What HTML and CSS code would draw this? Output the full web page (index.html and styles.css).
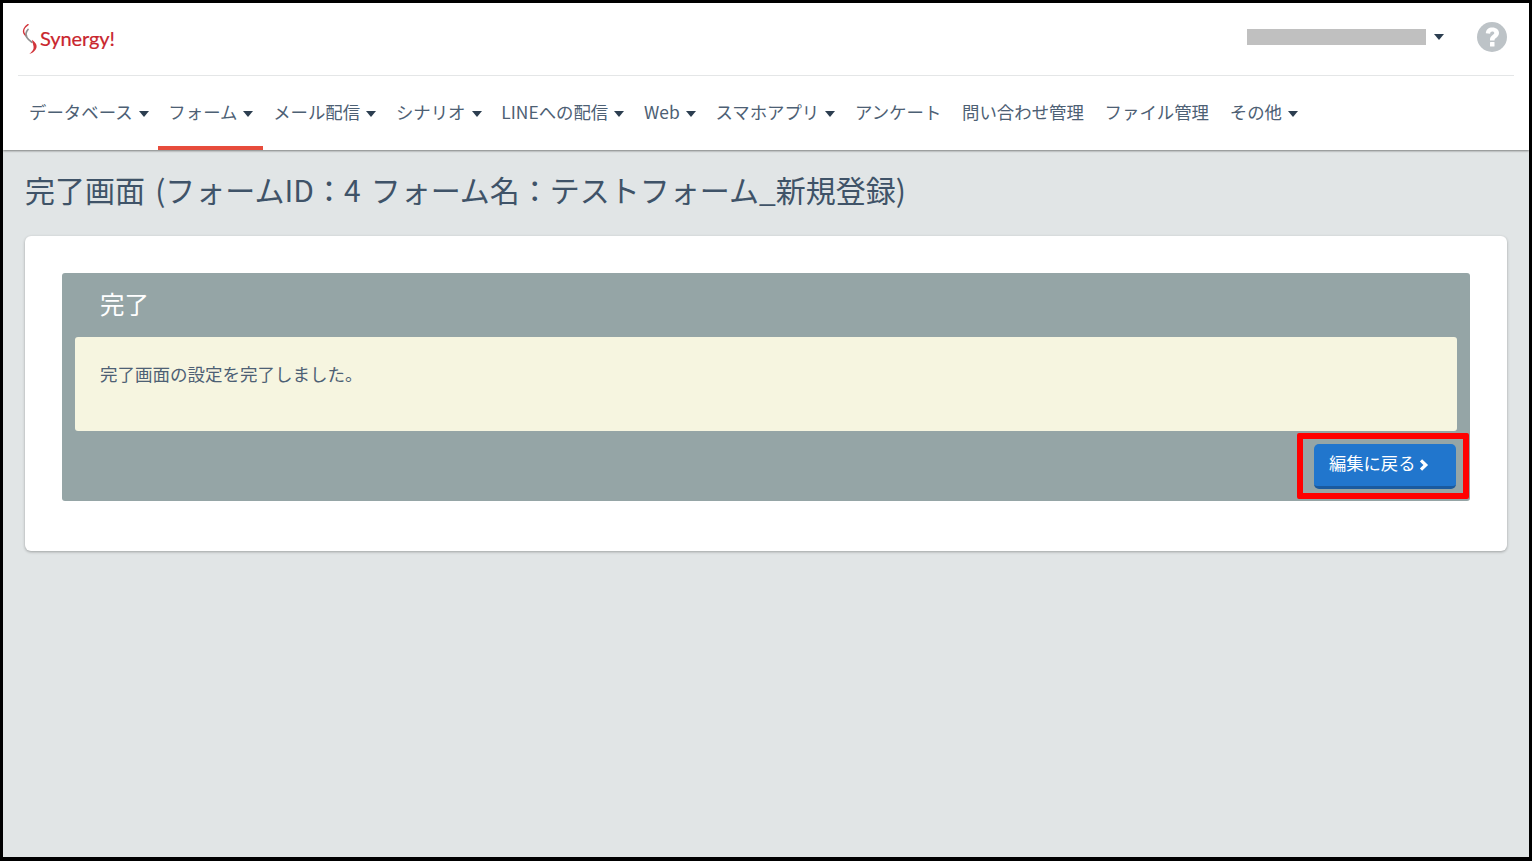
FILE: index.html
```html
<!DOCTYPE html>
<html lang="ja">
<head>
    <meta charset="UTF-8">
    <title>完了画面</title>
    <link rel="stylesheet" href="styles.css">
</head>
<body>
    <div class="frame">
        <header class="site-header">
            <div class="top-bar">
                <a class="logo" href="#">
                    <svg class="logo-mark" width="16" height="30" viewBox="0 0 16 30" fill="none" stroke-linecap="round">
                        <path d="M6 .7C2.500 3 .8 6.500 2 9.200C2.600 10.500 3.400 11.300 4.500 12" stroke="#d2353b" stroke-width="1.500"/>
                        <path d="M6 5.500C3.800 8 3.400 10.800 4.800 13.300C6 15.400 8 16.800 10 18.300" stroke="#8f8f8f" stroke-width="1.700"/>
                        <path d="M10 15.700C13 18 15 20 14.600 23C14.200 26 11 29 7.300 30C10 27.500 12 25.500 11.600 22.800C11.300 20.500 10.500 18.500 10 15.700Z" fill="#d2353b"/>
                    </svg>
                    <span class="logo-text">Synergy!</span>
                </a>
                <div class="user-box">
                    <span class="user-mask"></span>
                    <span class="caret caret-user"></span>
                    <svg class="help-icon" width="30" height="30" viewBox="0 0 30 30">
                        <circle cx="15" cy="15" r="15" fill="#bdc3c7"/>
                        <path d="M8.800 11.300C9.100 7.500 11.500 5.500 15.300 5.500C19.300 5.500 22 7.800 22 11.100C22 13.500 20.700 14.700 19 15.900C17.800 16.700 17.500 17.300 17.500 18.600H13V17.800C13 15.700 13.700 14.500 15.400 13.300C16.700 12.400 17.300 11.900 17.300 11.100C17.300 10.100 16.500 9.500 15.300 9.500C14 9.500 13.300 10.300 13.100 11.700Z" fill="#fff"/>
                        <rect x="13" y="20" width="4.500" height="4.500" rx="0.500" fill="#fff"/>
                    </svg>
                </div>
            </div>
            <nav class="main-nav">
                <a class="nav-item" href="#">データベース<span class="caret"></span></a>
                <a class="nav-item is-active" href="#">フォーム<span class="caret"></span></a>
                <a class="nav-item" href="#">メール配信<span class="caret"></span></a>
                <a class="nav-item" href="#">シナリオ<span class="caret"></span></a>
                <a class="nav-item" href="#">LINEへの配信<span class="caret"></span></a>
                <a class="nav-item" href="#">Web<span class="caret"></span></a>
                <a class="nav-item" href="#">スマホアプリ<span class="caret"></span></a>
                <a class="nav-item" href="#">アンケート</a>
                <a class="nav-item" href="#">問い合わせ管理</a>
                <a class="nav-item" href="#">ファイル管理</a>
                <a class="nav-item" href="#">その他<span class="caret"></span></a>
            </nav>
        </header>

        <main class="content">
            <h1 class="page-title">完了画面 (フォームID：4 フォーム名：テストフォーム_新規登録)</h1>
            <section class="card">
                <div class="panel">
                    <h2 class="panel-title">完了</h2>
                    <div class="notice">完了画面の設定を完了しました。</div>
                    <div class="panel-actions">
                        <a class="btn-back" href="#">編集に戻る
                            <svg class="chevron" width="10" height="12" viewBox="0 0 10 12">
                                <path d="M2 1.300L6.800 6L2 10.700" fill="none" stroke="#fff" stroke-width="3.200"/>
                            </svg>
                        </a>
                    </div>
                    <div class="highlight"></div>
                </div>
            </section>
        </main>
    </div>
</body>
</html>
```

FILE: styles.css
```css
html, body {
    margin: 0;
    height: 100%;
}
body {
    background-color: #000;
    font-family: "Noto Sans CJK JP", "Noto Sans", sans-serif;
    color: #34495e;
}
a {
    color: inherit;
    text-decoration: none;
}
.frame {
    box-sizing: border-box;
    height: 861px;
    margin: 0 3px;
    border-top: 3px solid #000;
    border-bottom: 4px solid #000;
    background-color: #e1e5e6;
    overflow: hidden;
}
.site-header {
    background-color: #fff;
    height: 147px;
    box-shadow: 0 1px 2px rgba(0,0,0,0.45);
    padding: 0 15px;
}
.top-bar {
    height: 72px;
    border-bottom: 1px solid #e4e6e7;
    display: flex;
    align-items: center;
    justify-content: space-between;
}
.logo {
    display: flex;
    align-items: center;
    gap: 2px;
    margin-left: 4px;
    margin-top: -1px;
}
.logo-text {
    font-family: "Lato", sans-serif;
    font-size: 20px;
    letter-spacing: -0.1px;
    line-height: 28px;
    margin-top: -2px;
    color: #c9252d;
    -webkit-text-stroke: 0.2px #c9252d;
}
.user-box {
    display: flex;
    align-items: center;
    margin-top: -5px;
    margin-right: 7px;
}
.user-mask {
    width: 179px;
    height: 16px;
    background-color: #c0c0c0;
}
.caret {
    display: inline-block;
    width: 0;
    height: 0;
    margin-left: 6px;
    margin-right: -1px;
    vertical-align: 2px;
    border-top: 6px solid #2c3e50;
    border-left: 5px solid transparent;
    border-right: 5px solid transparent;
}
.caret-user {
    margin-left: 8px;
    margin-right: 0;
    vertical-align: 0;
}
.help-icon {
    margin-left: 33px;
}
.main-nav {
    display: flex;
    height: 74px;
    margin-left: 0.7px;
}
.nav-item {
    box-sizing: border-box;
    height: 74px;
    padding: 0 10.4px;
    font-size: 17.4px;
    line-height: 71px;
    white-space: nowrap;
    color: #4d6074;
}
.nav-item.is-active {
    border-bottom: 4px solid #e74c3c;
}
.content {
    padding: 0 22px;
}
.page-title {
    margin: 17px 0 25px;
    font-size: 30px;
    font-weight: 400;
    line-height: 44px;
    word-spacing: 3.5px;
    color: #3f5368;
    white-space: nowrap;
}
.card {
    box-sizing: border-box;
    height: 315px;
    padding: 37px;
    background-color: #fff;
    border-radius: 6px;
    box-shadow: 0 1px 3px rgba(0,0,0,0.3);
}
.panel {
    position: relative;
    box-sizing: border-box;
    height: 228px;
    padding: 0 13px;
    background-color: #95a5a6;
    border-radius: 3px;
}
.panel-title {
    margin: 0;
    padding-left: 25px;
    height: 64px;
    font-size: 24.5px;
    font-weight: 400;
    line-height: 62px;
    color: #fff;
}
.notice {
    box-sizing: border-box;
    height: 94px;
    padding: 23px 25px 0;
    background-color: #f6f5e0;
    border-radius: 3px;
    font-size: 17.5px;
    line-height: 28px;
    color: #4d6074;
}
.panel-actions {
    display: flex;
    justify-content: flex-end;
    padding: 13px 1px 0 0;
}
.btn-back {
    box-sizing: border-box;
    width: 142px;
    height: 45px;
    padding-left: 15px;
    background-color: #2176cd;
    border-bottom: 3px solid #1a5a9e;
    border-radius: 5px;
    font-size: 17.3px;
    line-height: 38px;
    color: #fff;
    white-space: nowrap;
}
.chevron {
    vertical-align: -1px;
}
/* annotation box over the button */
.highlight {
    position: absolute;
    right: 1px;
    bottom: 2px;
    box-sizing: border-box;
    width: 172px;
    height: 66px;
    border: 6px solid #f00;
    border-radius: 2px;
}
```
